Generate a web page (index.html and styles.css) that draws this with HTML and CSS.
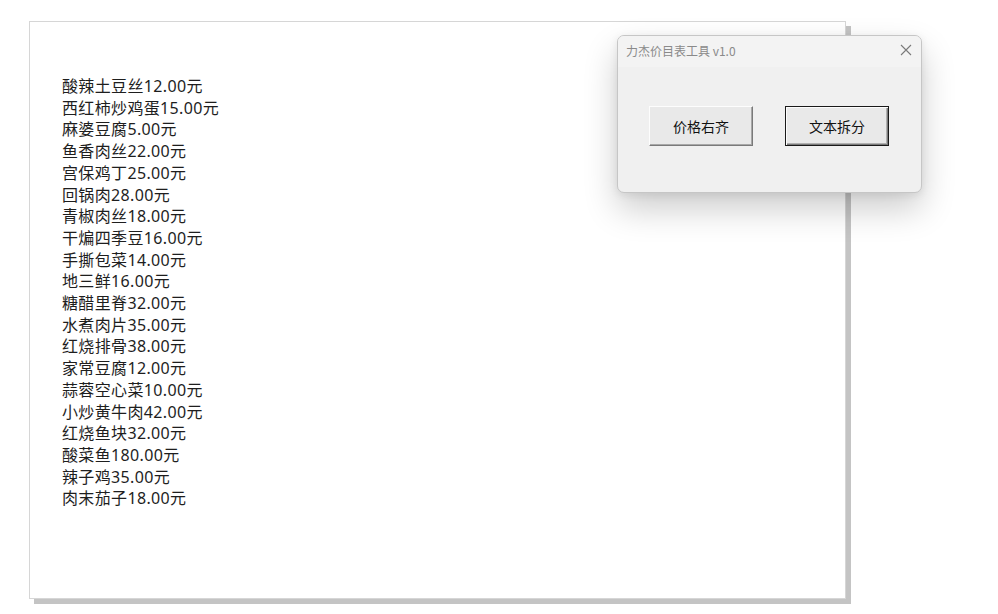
FILE: index.html
```html
<!DOCTYPE html>
<html lang="zh-CN">
<head>
<meta charset="utf-8">
<title>力杰价目表工具</title>
<link rel="stylesheet" href="styles.css">
</head>
<body>
<div class="sheet">
  <div class="menu">
    <div>酸辣土豆丝12.00元</div>
    <div>西红柿炒鸡蛋15.00元</div>
    <div>麻婆豆腐5.00元</div>
    <div>鱼香肉丝22.00元</div>
    <div>宫保鸡丁25.00元</div>
    <div>回锅肉28.00元</div>
    <div>青椒肉丝18.00元</div>
    <div>干煸四季豆16.00元</div>
    <div>手撕包菜14.00元</div>
    <div>地三鲜16.00元</div>
    <div>糖醋里脊32.00元</div>
    <div>水煮肉片35.00元</div>
    <div>红烧排骨38.00元</div>
    <div>家常豆腐12.00元</div>
    <div>蒜蓉空心菜10.00元</div>
    <div>小炒黄牛肉42.00元</div>
    <div>红烧鱼块32.00元</div>
    <div>酸菜鱼180.00元</div>
    <div>辣子鸡35.00元</div>
    <div>肉末茄子18.00元</div>
  </div>
</div>

<div class="dialog">
  <div class="titlebar">
    <span class="title">力杰价目表工具 v1.0</span>
    <svg class="close" width="12" height="12" viewBox="0 0 12 12">
      <path d="M1 1 L11 11 M11 1 L1 11" stroke="#7a7a7a" stroke-width="1.1" fill="none"/>
    </svg>
  </div>
  <div class="body">
    <button class="btn">价格右齐</button>
    <button class="btn default">文本拆分</button>
  </div>
</div>
</body>
</html>
```

FILE: styles.css
```css
html, body {
  margin: 0;
  padding: 0;
  background: #ffffff;
}
body {
  width: 998px;
  height: 614px;
  overflow: hidden;
  position: relative;
  padding-top: 21px;
  padding-left: 29px;
  box-sizing: border-box;
}
.sheet {
  width: 817px;
  height: 578px;
  box-sizing: border-box;
  border: 1px solid #d6d6d6;
  background: #ffffff;
  box-shadow: 5px 5px 0 #c4c4c4;
  padding: 54px 0 0 32px;
}
.menu {
  font-family: "Noto Sans", "Noto Sans CJK SC", sans-serif;
  font-size: 16px;
  line-height: 21.7px;
  letter-spacing: 0.35px;
  color: #1e1e1e;
}
.dialog {
  position: absolute;
  left: 617px;
  top: 35px;
  width: 305px;
  height: 158px;
  box-sizing: border-box;
  border: 1px solid #c6c6c6;
  border-radius: 7px;
  background: #f0f0f0;
  box-shadow: 0 16px 34px rgba(0, 0, 0, 0.2), 0 2px 8px rgba(0, 0, 0, 0.08);
  display: flex;
  flex-direction: column;
  overflow: hidden;
}
.titlebar {
  height: 31px;
  flex: none;
  box-sizing: border-box;
  background: #f3f3f3;
  display: flex;
  align-items: center;
  justify-content: space-between;
  padding: 0 9px 3px 8px;
}
.title {
  font-family: "Noto Sans CJK SC", sans-serif;
  font-size: 12px;
  color: #8a8a8a;
}
.close {
  display: block;
}
.body {
  flex: 1;
  display: flex;
  align-items: flex-start;
  padding: 39px 0 0 31px;
  gap: 32px;
}
.btn {
  width: 104px;
  height: 40px;
  box-sizing: border-box;
  margin: 0;
  padding: 0;
  font-family: "Noto Sans CJK SC", sans-serif;
  font-size: 14px;
  color: #111111;
  background: #e9e9e9;
  border: 1px solid;
  border-color: #fdfdfd #7a7a7a #7a7a7a #fdfdfd;
  box-shadow: inset -1px -1px 0 #a8a8a8;
}
.btn.default {
  border: 1px solid #1a1a1a;
  box-shadow: inset 1px 1px 0 #fdfdfd, inset -1px -1px 0 #7a7a7a, inset -2px -2px 0 #b0b0b0;
}
```
